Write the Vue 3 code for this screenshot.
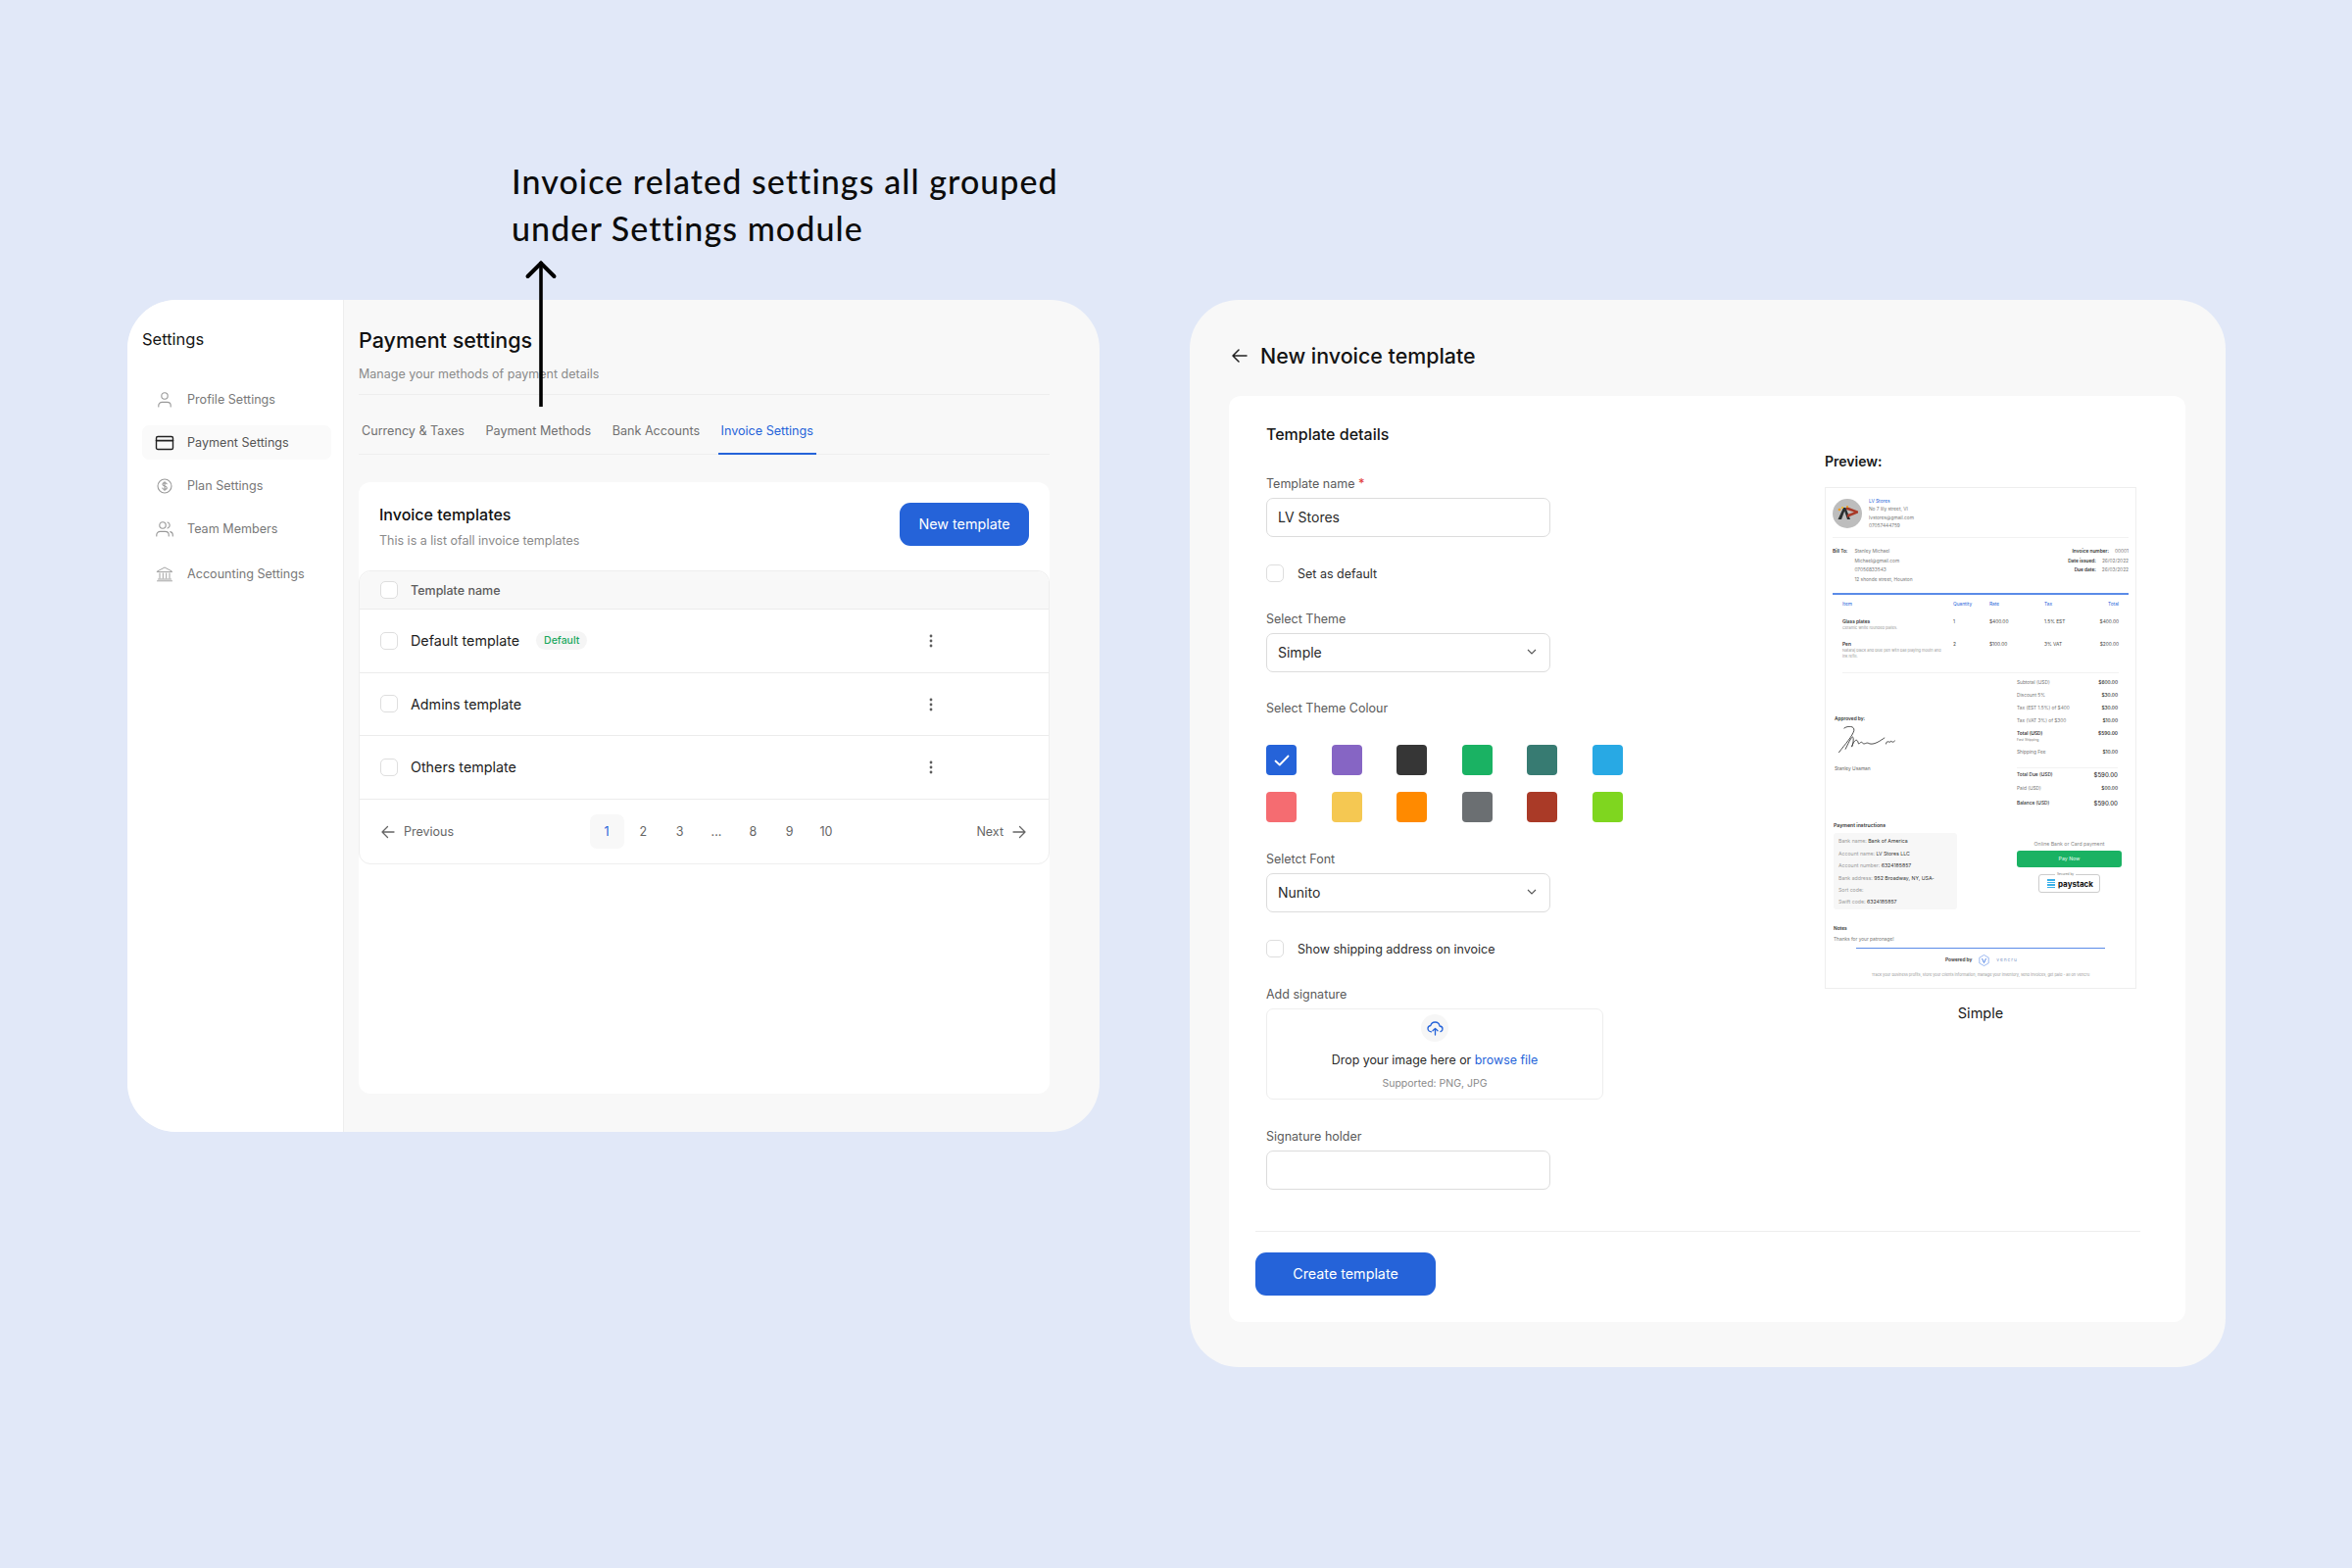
<script setup>
const navItems = [
  { label: 'Profile Settings', icon: 'user' },
  { label: 'Payment Settings', icon: 'card', active: true },
  { label: 'Plan Settings', icon: 'plan' },
  { label: 'Team Members', icon: 'team' },
  { label: 'Accounting Settings', icon: 'bank' }
]
const tabs = ['Currency & Taxes', 'Payment Methods', 'Bank Accounts', 'Invoice Settings']
const templates = [
  { name: 'Default template', isDefault: true },
  { name: 'Admins template' },
  { name: 'Others template' }
]
const pages = ['1', '2', '3', '...', '8', '9', '10']
const swatches = [
  '#2563d9', '#8665c4', '#363636', '#1ab263', '#377b72', '#28a9e4',
  '#f56c71', '#f5c852', '#ff8a00', '#6b6f72', '#aa3a27', '#7fd61f'
]
const invoiceItems = [
  { name: 'Glass plates', desc: 'Ceramic white rounded plates.', qty: '1', rate: '$400.00', tax: '1.5% EST', total: '$400.00' },
  { name: 'Pen', desc: 'Nataraj black and blue pen with ball playing mouth and ink refill.', qty: '2', rate: '$100.00', tax: '3% VAT', total: '$200.00' }
]
const bankLines = [
  ['Bank name:', 'Bank of America'],
  ['Account name:', 'LV Stores LLC'],
  ['Account number:', '6324185857'],
  ['Bank address:', '952 Broadway, NY, USA-'],
  ['Sort code:', ''],
  ['Swift code:', '6324185857']
]
</script>

<template>
  <div class="page">
    <p class="note">Invoice related settings all grouped<br>under Settings module</p>
    <svg class="note-arrow" width="34" height="150" viewBox="0 0 34 150" fill="none" stroke="#000" stroke-width="3.6">
      <path d="M17 2V150" />
      <path d="M3.500 17L17 3.500L30.500 17" stroke-linecap="round" stroke-width="4" />
    </svg>

    <div class="windows">
      <!-- settings window -->
      <section class="window settings-window">
        <aside class="sidebar">
          <h2 class="sidebar-title">Settings</h2>
          <nav class="nav">
            <a v-for="item in navItems" :key="item.label" class="nav-item" :class="{ active: item.active }">
              <svg class="nav-icon" width="20" height="20" viewBox="0 0 20 20" fill="none" stroke="currentColor" stroke-width="1.1" stroke-linecap="round">
                <template v-if="item.icon === 'user'">
                  <circle cx="10" cy="6" r="3.2" />
                  <path d="M3.8 17v-1.2c0-2 1.6-3.4 3.6-3.4h5.2c2 0 3.6 1.4 3.6 3.4V17" />
                </template>
                <template v-else-if="item.icon === 'card'">
                  <rect x="1.5" y="3.5" width="17" height="13" rx="1.6" stroke-width="1.4" />
                  <path d="M1.5 7.6h17" stroke-width="1.6" />
                </template>
                <template v-else-if="item.icon === 'plan'">
                  <circle cx="10" cy="10" r="7" />
                  <path d="M12.2 7.8c-.4-.9-1.2-1.2-2.2-1.2-1.2 0-2.1.6-2.1 1.6 0 2.3 4.4 1.2 4.4 3.5 0 1-1 1.7-2.3 1.7-1 0-1.9-.4-2.3-1.3M10 5.6v8.800" />
                </template>
                <template v-else-if="item.icon === 'team'">
                  <circle cx="8" cy="6" r="3.2" />
                  <path d="M1.8 17v-1.2c0-2 1.6-3.4 3.6-3.4h5.2c2 0 3.6 1.4 3.6 3.4V17M13 3c1.500.4 2.200 1.600 2.200 3S14.500 8.600 13 9M15.800 12.600c1.500.4 2.500 1.500 2.500 3.200V17" />
                </template>
                <template v-else>
                  <path d="M2.500 7L10 3l7.500 4v.6h-15zM2.500 16.800h15M3.500 15h13M5 9v5M8.300 9v5M11.700 9v5M15 9v5" stroke-width="0.9" />
                </template>
              </svg>
              <span>{{ item.label }}</span>
            </a>
          </nav>
        </aside>

        <main class="settings-main">
          <header class="settings-head">
            <h1>Payment settings</h1>
            <p>Manage your methods of payment details</p>
          </header>

          <div class="tabs">
            <span v-for="(tab, i) in tabs" :key="tab" class="tab" :class="{ active: i === 3 }">{{ tab }}</span>
          </div>

          <div class="templates-card">
            <div class="templates-head">
              <div>
                <h3>Invoice templates</h3>
                <p>This is a list ofall invoice templates</p>
              </div>
              <button class="btn-primary new-btn">New template</button>
            </div>

            <div class="table">
              <div class="table-row table-header">
                <span class="checkbox"></span>
                <span>Template name</span>
              </div>
              <div v-for="t in templates" :key="t.name" class="table-row">
                <span class="checkbox"></span>
                <span class="row-name">{{ t.name }}</span>
                <span v-if="t.isDefault" class="badge">Default</span>
                <svg class="kebab" width="4" height="14" viewBox="0 0 4 14" fill="#5d5d5d">
                  <circle cx="2" cy="2" r="1.4" />
                  <circle cx="2" cy="7" r="1.4" />
                  <circle cx="2" cy="12" r="1.4" />
                </svg>
              </div>
              <div class="pagination">
                <span class="page-nav prev">
                  <svg width="14" height="14" viewBox="0 0 14 14" fill="none" stroke="#666" stroke-width="1.3" stroke-linecap="round" stroke-linejoin="round"><path d="M13 7H1M6.500 1.500L1 7l5.500 5.500" /></svg>
                  Previous
                </span>
                <div class="pages">
                  <span v-for="(p, i) in pages" :key="p" class="page-num" :class="{ current: i === 0 }">{{ p }}</span>
                </div>
                <span class="page-nav next">
                  Next
                  <svg width="14" height="14" viewBox="0 0 14 14" fill="none" stroke="#666" stroke-width="1.3" stroke-linecap="round" stroke-linejoin="round"><path d="M1 7h12M7.500 1.500L13 7l-5.500 5.500" /></svg>
                </span>
              </div>
            </div>
          </div>
        </main>
      </section>

      <!-- new template window -->
      <section class="window template-window">
        <header class="template-head">
          <svg width="16" height="14" viewBox="0 0 16 14" fill="none" stroke="#222" stroke-width="1.5" stroke-linecap="round" stroke-linejoin="round"><path d="M15 7H1M7 1L1 7l6 6" /></svg>
          <h1>New invoice template</h1>
        </header>

        <div class="template-card">
          <div class="template-body">
            <form class="form">
              <h3>Template details</h3>

              <label class="field-label first-label">Template name <b>*</b></label>
              <div class="input">LV Stores</div>

              <div class="check-row"><span class="checkbox"></span>Set as default</div>

              <label class="field-label">Select Theme</label>
              <div class="input select">
                Simple
                <svg width="10" height="6" viewBox="0 0 10 6" fill="none" stroke="#555" stroke-width="1.1"><path d="M1 1l4 4 4-4" /></svg>
              </div>

              <label class="field-label colour-label">Select Theme Colour</label>
              <div class="swatches">
                <span v-for="(c, i) in swatches" :key="c" class="swatch" :style="{ background: c }">
                  <svg v-if="i === 0" width="16" height="12" viewBox="0 0 16 12" fill="none" stroke="#fff" stroke-width="1.8" stroke-linecap="round" stroke-linejoin="round"><path d="M1.500 6.500L5.800 10.500L14.500 1.500" /></svg>
                </span>
              </div>

              <label class="field-label">Seletct Font</label>
              <div class="input select">
                Nunito
                <svg width="10" height="6" viewBox="0 0 10 6" fill="none" stroke="#555" stroke-width="1.1"><path d="M1 1l4 4 4-4" /></svg>
              </div>

              <div class="check-row"><span class="checkbox"></span>Show shipping address on invoice</div>

              <label class="field-label">Add signature</label>
              <div class="dropzone">
                <span class="upload-icon">
                  <svg width="17" height="15" viewBox="0 0 17 15" fill="none" stroke="#2563d9" stroke-width="1.3" stroke-linecap="round" stroke-linejoin="round">
                    <path d="M4.500 10.800C2.500 10.800 1 9.400 1 7.600c0-1.600 1.200-2.900 2.800-3.100C4.400 2.400 6.200 1 8.300 1c2.400 0 4.400 1.700 4.700 4 1.700.1 3 1.300 3 2.900 0 1.300-.9 2.400-2 2.800" />
                    <path d="M8.500 14V7.500M6 9.800l2.500-2.400 2.500 2.400" />
                  </svg>
                </span>
                <p class="drop-text">Drop your image here or <a>browse file</a></p>
                <p class="drop-sub">Supported: PNG, JPG</p>
              </div>

              <label class="field-label">Signature holder</label>
              <div class="input"></div>
            </form>

            <div class="preview">
              <h4>Preview:</h4>
              <div class="invoice">
                <div class="inv-company">
                  <svg class="inv-logo" width="30" height="30" viewBox="0 0 30 30">
                    <circle cx="15" cy="15" r="15" fill="#bdbdbd" />
                    <path d="M5.500 21L11 9h2.500L9 21zM11 9h2.500l4.500 12h-3z" fill="#2b2f2f" />
                    <path d="M14 8l12 4.500v2L15 19v-3l7-2.500L14 11z" fill="#a93a28" />
                    <circle cx="7" cy="11" r="1.3" fill="#f39c12" />
                    <circle cx="10" cy="9" r="1.1" fill="#f5b91e" />
                    <circle cx="15" cy="8" r="1" fill="#f39c12" />
                  </svg>
                  <div>
                    <div class="inv-blue">LV Stores</div>
                    <div>No 7 lily street, VI</div>
                    <div>lvstores@gmail.com</div>
                    <div>07057444759</div>
                  </div>
                </div>

                <div class="inv-bill">
                  <div class="inv-billto">
                    <b>Bill To:</b>
                    <div>
                      <div>Stanley Michael</div>
                      <div>Michael@gmail.com</div>
                      <div>07056833543</div>
                      <div>12 shonde street, Houston</div>
                    </div>
                  </div>
                  <div class="inv-meta">
                    <div><b>Invoice number:</b><span class="meta-num">00001</span></div>
                    <div><b>Date issued:</b><span>26/02/2022</span></div>
                    <div><b>Due date:</b><span>26/03/2022</span></div>
                  </div>
                </div>

                <div class="inv-table">
                  <div class="inv-row inv-row-head">
                    <span>Item</span><span>Quantity</span><span>Rate</span><span>Tax</span><span class="right">Total</span>
                  </div>
                  <div v-for="it in invoiceItems" :key="it.name" class="inv-row inv-item">
                    <div class="inv-item-name"><b>{{ it.name }}</b><small>{{ it.desc }}</small></div>
                    <span>{{ it.qty }}</span><span>{{ it.rate }}</span><span>{{ it.tax }}</span><span class="right">{{ it.total }}</span>
                  </div>
                </div>

                <div class="inv-summary">
                  <div class="inv-approved">
                    <b>Approved by:</b>
                    <svg class="signature" width="58" height="27" viewBox="105 135 173 81" fill="none" stroke="#222" stroke-width="2.4" stroke-linecap="round">
                      <path d="M106 215C125 190 148 165 152 148C154 135 135 132 122 141" />
                      <path d="M126 205C136 185 148 158 150 172C151 190 142 204 146 196C153 176 162 172 165 186C167 196 172 178 178 186C184 194 190 182 198 188C212 194 232 180 245 171" />
                      <path d="M250 189C252 176 260 186 264 183C266 176 268 190 277 180" />
                    </svg>
                    <div class="inv-signer">Stanley Usaman</div>
                  </div>
                  <div class="inv-totals">
                    <div class="t-row"><span>Subtotal (USD)</span><b>$600.00</b></div>
                    <div class="t-row"><span>Discount 5%</span><b>$30.00</b></div>
                    <div class="t-row"><span>Tax (EST 1.5%) of $400</span><b>$30.00</b></div>
                    <div class="t-row"><span>Tax (VAT 3%) of $300</span><b>$10.00</b></div>
                    <div class="t-row t-total"><b>Total (USD)</b><b>$590.00</b></div>
                    <small class="t-note">Fast Shipping</small>
                    <div class="t-row t-ship"><span>Shipping Fee</span><b>$10.00</b></div>
                    <div class="t-row t-due"><b>Total Due (USD)</b><b class="big">$590.00</b></div>
                    <div class="t-row t-paid"><span>Paid (USD)</span><b>$00.00</b></div>
                    <div class="t-row t-balance"><b>Balance (USD)</b><b class="big">$590.00</b></div>
                  </div>
                </div>

                <div class="inv-pay">
                  <div class="inv-bank">
                    <b>Payment instructions</b>
                    <div class="bank-box">
                      <div v-for="l in bankLines" :key="l[0]"><span>{{ l[0] }}</span> {{ l[1] }}</div>
                    </div>
                  </div>
                  <div class="inv-online">
                    <div class="online-label">Online Bank or Card payment</div>
                    <div class="pay-btn">Pay Now</div>
                    <div class="paystack">
                      <small>Secured by</small>
                      <span class="stack-bars"><i></i><i></i><i></i><i></i></span>
                      <b>paystack</b>
                    </div>
                  </div>
                </div>

                <div class="inv-notes">
                  <b>Notes</b>
                  <div>Thanks for your patronage!</div>
                </div>

                <div class="inv-foot">
                  <div class="powered">
                    <b>Powered by</b>
                    <svg width="11" height="12" viewBox="0 0 11 12" fill="none" stroke="#5b8be8" stroke-width="0.6">
                      <path d="M5.500 .5l4.700 2.700v5.600L5.500 11.500.8 8.800V3.200z" />
                      <path d="M3.500 4l2 4.500 2-4.500" stroke-width="1" />
                    </svg>
                    <span>vencru</span>
                  </div>
                  <p>Track your business profits, store your clients information, manage your inventory, send invoices, get paid - all on Vencru</p>
                </div>
              </div>
              <div class="preview-name">Simple</div>
            </div>
          </div>

          <div class="template-foot">
            <button class="btn-primary create-btn">Create template</button>
          </div>
        </div>
      </section>
    </div>
  </div>
</template>

<style>
html, body {
  margin: 0;
  background: #e1e8f8;
}
</style>

<style scoped>
* {
  box-sizing: border-box;
}

.page {
  position: relative;
  width: 2400px;
  height: 1600px;
  padding: 161px 0 0 130px;
  background: #e1e8f8;
  font-family: Inter, "Liberation Sans", sans-serif;
  color: #111;
  overflow: hidden;
}

h1, h2, h3, h4, p {
  margin: 0;
  font-weight: 500;
}

.note {
  height: 145px;
  margin-left: 392px;
  font-family: Lato, Inter, sans-serif;
  font-size: 34px;
  line-height: 48px;
  letter-spacing: 1.06px;
  color: #0c0c0c;
}

.note-arrow {
  position: absolute;
  left: 535px;
  top: 265px;
  z-index: 2;
}

.windows {
  display: flex;
  align-items: flex-start;
  gap: 92px;
}

.window {
  border-radius: 50px;
  background: #f8f8f8;
  overflow: hidden;
}

/* left window */
.settings-window {
  display: flex;
  width: 992px;
  height: 849px;
}

.sidebar {
  width: 221px;
  flex-shrink: 0;
  padding: 30px 12px 0 15px;
  background: #fff;
  border-right: 1px solid #eee;
}

.sidebar-title {
  font-size: 16.5px;
  line-height: 20px;
  font-weight: 400;
  color: #151515;
}

.nav {
  display: flex;
  flex-direction: column;
  gap: 9px;
  margin-top: 34px;
}

.nav-item {
  display: flex;
  align-items: center;
  gap: 13px;
  height: 35px;
  padding-left: 13px;
  border-radius: 7px;
  font-size: 12.6px;
  color: #787878;
}

.nav-item:last-child {
  margin-top: 2px;
}

.nav-item.active {
  background: #fafafa;
  color: #555;
}

.nav-icon {
  color: #999;
  flex-shrink: 0;
}

.nav-item.active .nav-icon {
  color: #222;
}

.settings-main {
  flex: 1;
  padding: 28px 51px 0 15px;
}

.settings-head {
  height: 69px;
  border-bottom: 1px solid #eeeeee;
}

.settings-head h1 {
  font-size: 21.5px;
  line-height: 27px;
  font-weight: 450;
  color: #111;
}

.settings-head p {
  margin-top: 13px;
  font-size: 12.5px;
  line-height: 16px;
  font-weight: 400;
  color: #8a8a8a;
}

.tabs {
  display: flex;
  gap: 15.5px;
  height: 61px;
  align-items: flex-end;
  border-bottom: 1px solid #eee;
}

.tab {
  padding: 0 3px 14px;
  margin-bottom: -1px;
  font-size: 12.6px;
  line-height: 16px;
  color: #707070;
  border-bottom: 2px solid transparent;
}

.tab.active {
  color: #2563d9;
  border-bottom-color: #2563d9;
}

.templates-card {
  height: 624px;
  margin-top: 28px;
  border-radius: 12px;
  background: #fff;
}

.templates-head {
  display: flex;
  justify-content: space-between;
  height: 90px;
  padding: 21px 21px 0;
}

.templates-head h3 {
  margin-top: 3px;
  font-size: 16px;
  line-height: 18px;
  font-weight: 450;
  color: #111;
}

.templates-head p {
  margin-top: 10px;
  font-size: 12.5px;
  line-height: 16px;
  font-weight: 400;
  color: #8a8a8a;
}

.btn-primary {
  height: 44px;
  padding: 0 0 1px;
  border: 0;
  border-radius: 11px;
  background: #2563d9;
  color: #fff;
  font-family: inherit;
  font-size: 14.3px;
  font-weight: 400;
}

.new-btn {
  width: 132px;
}

.table {
  border: 1px solid #eee;
  border-radius: 12px;
  height: 300px;
}

.table-row {
  display: flex;
  align-items: center;
  height: 64.6px;
  padding-left: 21px;
  border-bottom: 1px solid #ececec;
  position: relative;
}

.table-header {
  height: 39px;
  background: #f8f8f8;
  border-radius: 12px 12px 0 0;
  font-size: 12.5px;
  font-weight: 500;
  color: #5c5c5c;
}

.checkbox {
  display: inline-block;
  width: 18px;
  height: 18px;
  flex-shrink: 0;
  margin-right: 13px;
  border: 1px solid #dedede;
  border-radius: 5px;
  background: #fff;
}

.row-name {
  font-size: 14.3px;
  color: #1d1d1d;
}

.badge {
  margin-left: 17px;
  padding: 0 8px;
  height: 19px;
  line-height: 19px;
  border-radius: 10px;
  background: #f5f5f5;
  color: #1aa85e;
  font-size: 10.5px;
  font-weight: 500;
}

.kebab {
  position: absolute;
  left: 581px;
  top: 25px;
}

.pagination {
  display: flex;
  align-items: center;
  justify-content: space-between;
  height: 66px;
  padding: 0 23px 0 22px;
}

.page-nav {
  display: flex;
  align-items: center;
  gap: 9px;
  width: 100px;
  font-size: 12.5px;
  color: #666;
}

.page-nav.next {
  justify-content: flex-end;
}

.pages {
  display: flex;
  gap: 2.3px;
  margin-left: 13px;
  margin-right: -13px;
}

.page-num {
  width: 35px;
  height: 35px;
  line-height: 35px;
  text-align: center;
  font-size: 12.5px;
  color: #666;
  border-radius: 7px;
}

.page-num.current {
  background: #f8f8f8;
  color: #2563d9;
}

/* right window */
.template-window {
  width: 1057px;
  height: 1089px;
  padding: 42px 41px 0 40px;
}

.template-head {
  display: flex;
  align-items: center;
  gap: 13px;
  height: 30px;
  padding-left: 3px;
}

.template-head h1 {
  font-size: 21.4px;
  line-height: 30px;
  font-weight: 450;
  color: #141414;
}

.template-card {
  height: 945px;
  margin-top: 26px;
  border-radius: 12px;
  background: #fff;
  padding: 0 46px 0 27px;
}

.template-body {
  display: flex;
  height: 852px;
}

.form {
  width: 581px;
  padding: 29px 0 0 11px;
  flex-shrink: 0;
}

.form h3 {
  font-size: 16px;
  line-height: 20px;
  font-weight: 450;
  color: #161616;
}

.field-label {
  display: block;
  margin: 30px 0 6px;
  font-size: 12.5px;
  line-height: 16px;
  color: #5a5a5a;
}

.first-label {
  margin-top: 33px;
}

.colour-label {
  margin-top: 29px;
}

.field-label b {
  color: #e23b3b;
  font-weight: 500;
}

.input {
  display: flex;
  align-items: center;
  justify-content: space-between;
  width: 290px;
  height: 40px;
  padding: 0 13px 2px 11px;
  border: 1px solid #dcdcdc;
  border-radius: 7px;
  background: #fff;
  font-size: 14px;
  color: #2a2a2a;
}

.check-row {
  display: flex;
  align-items: center;
  height: 18px;
  margin-top: 28px;
  font-size: 12.5px;
  font-weight: 400;
  color: #2e2e2e;
}

.check-row .checkbox {
  margin-right: 14px;
}

.swatches {
  display: grid;
  grid-template-columns: repeat(6, 31px);
  column-gap: 35.5px;
  row-gap: 17px;
  margin-top: 29px;
}

.swatch {
  display: flex;
  align-items: center;
  justify-content: center;
  width: 31px;
  height: 31px;
  border-radius: 4px;
}

.dropzone {
  width: 344px;
  height: 93px;
  padding-top: 5px;
  border: 1px solid #eee;
  border-radius: 7px;
  text-align: center;
}

.upload-icon {
  display: flex;
  align-items: center;
  justify-content: center;
  width: 28px;
  height: 28px;
  margin: 0 auto;
  border-radius: 50%;
  background: #f6f6f6;
}

.drop-text {
  margin-top: 11px;
  font-size: 12.4px;
  line-height: 16px;
  font-weight: 400;
  color: #2a2a2a;
}

.drop-text a {
  color: #2563d9;
}

.drop-sub {
  margin-top: 9px;
  font-size: 10.5px;
  line-height: 14px;
  font-weight: 400;
  color: #8a8a8a;
}

.template-foot {
  padding-top: 21px;
  border-top: 1px solid #eee;
}

.create-btn {
  width: 184px;
}

/* preview */
.preview {
  width: 318px;
  padding-top: 57px;
  flex-shrink: 0;
}

.preview h4 {
  font-size: 14px;
  line-height: 20px;
  font-weight: 600;
  color: #1a1a1a;
}

.preview-name {
  margin-top: 15px;
  text-align: center;
  font-size: 14.5px;
  line-height: 20px;
  color: #1a1a1a;
}

.invoice {
  width: 318px;
  height: 512px;
  margin-top: 16px;
  padding: 9px 7px 0;
  border: 1px solid #eee;
  font-size: 4.8px;
  line-height: 8.3px;
  color: #777;
}

.invoice b {
  color: #333;
  font-weight: 600;
}

.inv-company {
  display: flex;
  gap: 7px;
  height: 42px;
  border-bottom: 1px solid #f2f2f2;
}

.inv-blue {
  color: #2563d9;
}

.inv-logo {
  margin-top: 2px;
}

.inv-bill {
  display: flex;
  justify-content: space-between;
  height: 58px;
  padding-top: 9px;
  border-bottom: 2px solid #5b8be8;
  line-height: 9.7px;
}

.inv-billto {
  display: flex;
  gap: 7px;
}

.inv-meta {
  text-align: right;
}

.inv-meta div {
  display: flex;
  justify-content: flex-end;
  gap: 6px;
}

.inv-table {
  height: 80px;
  margin: 0 10px;
  padding-top: 5px;
  border-bottom: 1px solid #f2f2f2;
}

.inv-row {
  display: grid;
  grid-template-columns: 113px 37px 56px 1fr 30px;
  line-height: 8px;
}

.inv-row-head {
  color: #2563d9;
}

.inv-item {
  margin-top: 10px;
  color: #444;
}

.inv-item + .inv-item {
  margin-top: 9px;
}

.inv-item-name {
  padding-right: 10px;
}

.inv-item-name small {
  display: block;
  font-size: 3.9px;
  line-height: 6px;
  color: #999;
}

.right {
  text-align: right;
}

.inv-summary {
  display: flex;
  justify-content: space-between;
  height: 147px;
  padding: 3px 11px 0 2px;
}

.inv-approved {
  padding-top: 39px;
  line-height: 8px;
}

.signature {
  display: block;
  margin: 4px 0 0 4px;
}

.inv-signer {
  margin-top: 12px;
  color: #666;
}

.inv-totals {
  width: 103px;
}

.t-row {
  display: flex;
  justify-content: space-between;
  height: 13px;
  line-height: 13px;
}

.t-row b {
  font-weight: 500;
}

.t-total b {
  font-weight: 600;
  color: #333;
}

.t-note {
  display: block;
  margin-top: -3px;
  font-size: 3.5px;
  line-height: 6px;
}

.t-ship {
  margin-top: 3px;
}

.t-due {
  margin-top: 9px;
  border-top: 1px solid #f2f2f2;
}

.t-paid,
.t-balance {
  margin-top: 2px;
}

.big {
  font-size: 6px;
}

.inv-pay {
  display: flex;
  justify-content: space-between;
  height: 101px;
  padding: 4px 7px 0 1px;
  font-size: 5.2px;
}

.inv-bank {
  width: 126px;
}

.bank-box {
  height: 78px;
  margin-top: 4px;
  padding: 2px 5px;
  border-radius: 3px;
  background: #f7f7f7;
  line-height: 12.4px;
  color: #333;
}

.bank-box span {
  color: #999;
}

.inv-online {
  width: 107px;
  padding-top: 19px;
  text-align: center;
}

.online-label {
  color: #888;
}

.pay-btn {
  height: 17px;
  margin-top: 3px;
  line-height: 17px;
  border-radius: 3px;
  background: #1ab263;
  color: #d9f3e4;
  font-weight: 500;
}

.paystack {
  position: relative;
  display: flex;
  align-items: center;
  gap: 3px;
  width: 63px;
  height: 19px;
  margin: 7px 0 0 22px;
  padding-left: 8px;
  border: 1px solid #ccc;
  border-radius: 3px;
}

.paystack small {
  position: absolute;
  top: -4px;
  left: 16px;
  padding: 0 2px;
  background: #fff;
  font-size: 3.2px;
  line-height: 6px;
}

.paystack b {
  font-size: 8px;
  font-weight: 700;
  color: #111;
}

.stack-bars {
  display: flex;
  flex-direction: column;
  gap: 1px;
}

.stack-bars i {
  display: block;
  width: 8px;
  height: 1.5px;
  background: #3bb0e8;
}

.inv-notes {
  height: 20px;
  margin-top: 7px;
  padding-left: 1px;
  line-height: 11px;
}

.inv-foot {
  margin: 5px 24px 0;
  padding-top: 5px;
  border-top: 1.5px solid #5b8be8;
  text-align: center;
}

.powered {
  display: flex;
  align-items: center;
  justify-content: center;
  gap: 7px;
  height: 13px;
  padding-left: 2px;
}

.powered span {
  color: #7d97c7;
  letter-spacing: 1px;
}

.inv-foot p {
  margin: 6px -20px 0;
  font-size: 3.9px;
  line-height: 6px;
  font-weight: 400;
  white-space: nowrap;
  color: #999;
}
</style>
